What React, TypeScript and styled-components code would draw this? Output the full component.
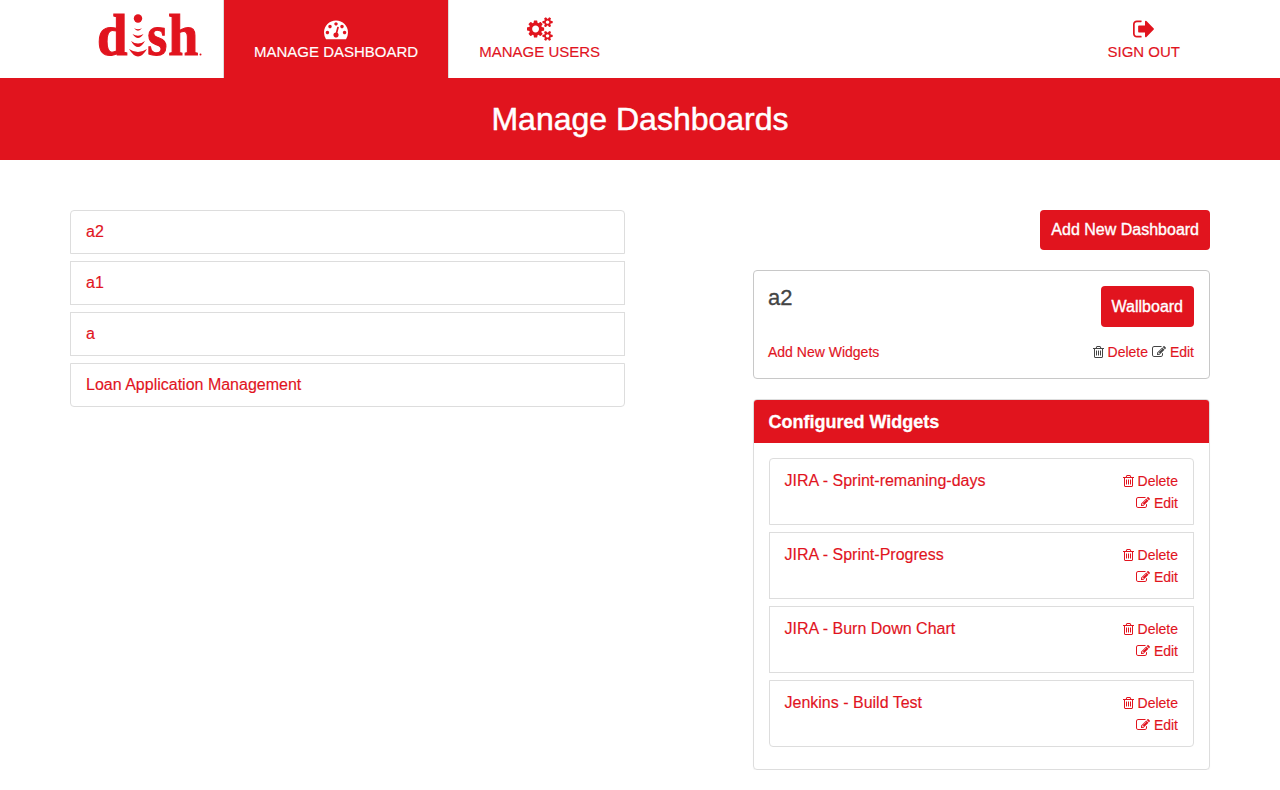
import React from 'react';
import styled, { createGlobalStyle } from 'styled-components';

const RED = '#e1141e';
const DARK = '#444444';

const GlobalStyle = createGlobalStyle`
  * { box-sizing: border-box; }
  body {
    margin: 0;
    background: #fff;
    color: ${DARK};
    font: 16px/22px "Liberation Sans", Arial, sans-serif;
    -webkit-text-stroke: 0.15px currentColor;
  }
`;

const bigGear = 'M832 896q0-106-75-181t-181-75-181 75-75 181 75 181 181 75 181-75 75-181zm768 512q0-52-38-90t-90-38-90 38-38 90q0 53 37.5 90.5t90.5 37.5 90.5-37.5 37.5-90.5zm0-1024q0-52-38-90t-90-38-90 38-38 90q0 53 37.5 90.5t90.5 37.5 90.5-37.5 37.5-90.5zm-384 421v185q0 10-7 19.5t-16 10.5l-155 24q-11 35-32 76 34 48 90 115 7 11 7 20 0 12-7 19-23 30-82.500 89.500t-78.500 59.500q-11 0-21-7l-115-90q-37 19-77 31-11 108-23 155-7 24-30 24h-186q-11 0-20-7.500t-10-17.500l-23-153q-34-10-75-31l-118 89q-7 7-20 7-11 0-21-8-144-133-144-160 0-9 7-19 10-14 41-53t47-61q-23-44-35-82l-152-24q-10-1-17-9.500t-7-19.500v-185q0-10 7-19.500t16-10.500l155-24q11-35 32-76-34-48-90-115-7-11-7-20 0-12 7-20 22-30 82-89t79-59q11 0 21 7l115 90q34-18 77-32 11-108 23-154 7-24 30-24h186q11 0 20 7.500t10 17.500l23 153q34 10 75 31l118-89q8-7 20-7 11 0 21 8 144 133 144 160 0 8-7 19-12 16-42 54t-45 60q23 48 34 82l152 23q10 2 17 10.500t7 19.500z';
const smallGear = 'v140q0 16-149 31-12 27-30 52 51 113 51 138 0 4-4 7-122 71-124 71-8 0-46-47t-52-68q-20 2-30 2t-30-2q-14 21-52 68t-46 47q-2 0-124-71-4-3-4-7 0-25 51-138-18-25-30-52-149-15-149-31v-140q0-16 149-31 13-29 30-52-51-113-51-138 0-4 4-7 4-2 35-20t59-34 30-16q8 0 46 46.500t52 67.500q20-2 30-2t30 2q51-71 92-112l6-2q4 0 124 70 4 3 4 7 0 25-51 138 17 23 30 52 149 15 149 31z';
const dot = 'q0-53-37.5-90.5t-90.5-37.5-90.5 37.5-37.5 90.5 37.5 90.5 90.5 37.5 90.5-37.5 37.5-90.5z';

const icons = {
  gauge: {
    x: 0,
    w: 1792,
    d: `M384 1152${dot}m192-448${dot}m428 481l101-382q6-26-7.5-48.5t-38.5-29.5-48 6.5-30 39.5l-101 382q-60 5-107 43.5t-63 98.5q-20 77 20 146t117 89 146-20 89-117q16-60-6-117t-72-91zm660-33${dot}m-640-640${dot}m448 192${dot}m320 448q0 261-141 483-19 29-54 29h-1402q-35 0-54-29-141-221-141-483 0-182 71-348t191-286 286-191 348-71 348 71 286 191 191 286 71 348z`,
  },
  gears: { x: -64, w: 1920, d: `${bigGear}m640 533${smallGear}m0-1024${smallGear}` },
  signOut: {
    x: 64,
    w: 1568,
    d: 'M704 1440q0 4 1 20t.5 26.5-3 23.5-10 19.5-20.500 6.500h-320q-119 0-203.500-84.500t-84.500-203.500v-704q0-119 84.500-203.500t203.500-84.500h320q13 0 22.500 9.500t9.500 22.500q0 4 1 20t.5 26.500-3 23.500-10 19.500-20.500 6.500h-320q-66 0-113 47t-47 113v704q0 66 47 113t113 47h312l11.500 1 11.500 3 8 5.500 7 9 2 13.500zm928-544q0 26-19 45l-544 544q-19 19-45 19t-45-19-19-45v-288h-448q-26 0-45-19t-19-45v-384q0-26 19-45t45-19h448v-288q0-26 19-45t45-19 45 19l544 544q19 19 19 45z',
  },
  trash: {
    x: 192,
    w: 1408,
    d: 'M704 736v576q0 14-9 23t-23 9h-64q-14 0-23-9t-9-23v-576q0-14 9-23t23-9h64q14 0 23 9t9 23zm256 0v576q0 14-9 23t-23 9h-64q-14 0-23-9t-9-23v-576q0-14 9-23t23-9h64q14 0 23 9t9 23zm256 0v576q0 14-9 23t-23 9h-64q-14 0-23-9t-9-23v-576q0-14 9-23t23-9h64q14 0 23 9t9 23zm128 724v-948h-896v948q0 22 7 40.500t14.500 27 10.500 8.500h832q3 0 10.500-8.500t14.500-27 7-40.500zm-672-1076h448l-48-117q-7-9-17-11h-317q-10 2-17 11zm928 32v64q0 14-9 23t-23 9h-96v948q0 83-47 143.500t-113 60.500h-832q-66 0-113-58.500t-47-141.500v-952h-96q-14 0-23-9t-9-23v-64q0-14 9-23t23-9h309l70-167q15-37 54-63t79-26h320q40 0 79 26t54 63l70 167h309q14 0 23 9t9 23z',
  },
  edit: {
    x: 0,
    w: 1792,
    d: 'M888 1184l116-116-152-152-116 116v56h96v96h56zm440-720q-16-16-33 1l-350 350q-17 17-1 33t33-1l350-350q17-17 1-33zm80 594v190q0 119-84.500 203.500t-203.500 84.500h-832q-119 0-203.500-84.500t-84.500-203.500v-832q0-119 84.500-203.500t203.500-84.500h832q63 0 117 25 15 7 18 23 3 17-9 29l-49 49q-14 14-32 8-23-6-45-6h-832q-66 0-113 47t-47 113v832q0 66 47 113t113 47h832q66 0 113-47t47-113v-126q0-13 9-22l64-64q15-15 35-7t20 29zm-96-738l288 288-672 672h-288v-288zm444 132l-92 92-288-288 92-92q28-28 68-28t68 28l152 152q28 28 28 68t-28 68z',
  },
};

const IconSvg = styled.svg`
  display: block;
  fill: currentColor;
  flex: none;
  overflow: visible;
`;

function Icon({ name, size }: { name: keyof typeof icons; size: number }) {
  const { x, w, d } = icons[name];
  return (
    <IconSvg width={(w / 1792) * size} height={size} viewBox={`${x} 0 ${w} 1792`} aria-hidden>
      <path d={d} />
    </IconSvg>
  );
}

const Header = styled.header`
  display: flex;
  height: 78px;
  padding: 0 70px;
`;

const LogoLink = styled.a`
  width: 153px;
  padding: 8px 0 0 24px;
`;

const LogoSvg = styled.svg`
  display: block;
  overflow: visible;
  font: bold 59px "Liberation Serif", serif;
  fill: ${RED};
  -webkit-text-stroke: 0;
  text {
    stroke: ${RED};
    stroke-width: 1.1px;
  }
`;

function Logo() {
  return (
    <LogoSvg width="112" height="54" viewBox="94 8 112 54" role="img" aria-label="dish">
      <text x="97" y="55.300" textLength="30.500" lengthAdjust="spacingAndGlyphs">d</text>
      <circle cx="138" cy="18.500" r="4.200" />
      <path d="M134 28Q138 30.500 142 28Q138 33.500 134 28Z" />
      <path d="M132.500 34Q138 37.500 143.500 34Q138 42 132.500 34Z" />
      <path d="M131 41Q138 46 145 41Q138 53 131 41Z" />
      <path d="M129 49Q138 55 147 49Q138 64 129 49Z" />
      <text x="147.200" y="55.300" textLength="20" lengthAdjust="spacingAndGlyphs">s</text>
      <text x="168.200" y="55.300" textLength="30" lengthAdjust="spacingAndGlyphs">h</text>
      <circle cx="200.500" cy="54.500" r="1" />
    </LogoSvg>
  );
}

const NavItem = styled.a<{ $active?: boolean; $end?: boolean }>`
  display: flex;
  flex-direction: column;
  align-items: center;
  gap: 0.5px;
  padding: 16.5px 30px 0;
  font-size: 15px;
  line-height: 21px;
  white-space: nowrap;
  color: ${(p) => (p.$active ? '#fff' : RED)};
  background: ${(p) => (p.$active ? RED : 'transparent')};
  border-left: 1px solid ${(p) => (p.$end ? 'transparent' : '#dddddd')};
  margin-left: ${(p) => (p.$end ? 'auto' : '0')};
`;

const Banner = styled.div`
  height: 82px;
  background: ${RED};
  text-align: center;
`;

const Title = styled.h1`
  margin: 0;
  color: #fff;
  font-size: 32px;
  font-weight: 400;
  line-height: 82px;
  -webkit-text-stroke: 0.5px #fff;
`;

const Content = styled.main`
  display: flex;
  justify-content: space-between;
  align-items: flex-start;
  padding: 50px 70px 0;
`;

const List = styled.div<{ $width?: string }>`
  display: flex;
  flex-direction: column;
  gap: 7px;
  width: ${(p) => p.$width ?? 'auto'};
`;

const Row = styled.div<{ $tall?: boolean }>`
  display: flex;
  justify-content: space-between;
  height: ${(p) => (p.$tall ? '67px' : '44px')};
  padding: ${(p) => (p.$tall ? '11px 15px 10px 14.500px' : '10px 15px')};
  border: 1px solid #dddddd;
  color: ${RED};
  &:first-child { border-radius: 4px 4px 0 0; }
  &:last-child { border-radius: 0 0 4px 4px; }
`;

const Side = styled.section`
  display: flex;
  flex-direction: column;
  width: 457px;
`;

const Button = styled.button<{ $tall?: boolean }>`
  align-self: flex-end;
  height: ${(p) => (p.$tall ? '41px' : '40px')};
  padding: 0 11px;
  border: 0;
  border-radius: 4px;
  background: ${RED};
  color: #fff;
  font: inherit;
  -webkit-text-stroke: 0.35px #fff;
`;

const Card = styled.div`
  display: flex;
  flex-direction: column;
  justify-content: space-between;
  height: 109px;
  margin-top: 20px;
  padding: 15px 15px 15px 14px;
  border: 1px solid #c8c8c8;
  border-radius: 4px;
`;

const Line = styled.div`
  display: flex;
  justify-content: space-between;
`;

const CardTitle = styled.h2`
  margin: 0;
  font-size: 22px;
  font-weight: 400;
  line-height: 24px;
  -webkit-text-stroke: 0.3px currentColor;
`;

const Link = styled.a`
  color: ${RED};
  font-size: 14px;
`;

const Actions = styled.div<{ $stacked?: boolean }>`
  display: flex;
  flex-direction: ${(p) => (p.$stacked ? 'column' : 'row')};
  align-items: ${(p) => (p.$stacked ? 'flex-end' : 'center')};
  gap: ${(p) => (p.$stacked ? '0' : '4px')};
`;

const Action = styled.span<{ $gap: number }>`
  display: flex;
  align-items: center;
  gap: ${(p) => p.$gap}px;
  height: 22px;
`;

const Panel = styled.div`
  height: 371px;
  margin-top: 20px;
  border: 1px solid #dddddd;
  border-radius: 4px;
  box-shadow: 0 1px 1px rgba(0, 0, 0, 0.05);
`;

const PanelHeading = styled.h3`
  height: 43px;
  margin: 0;
  padding: 1px 14.5px 0;
  border-radius: 3px 3px 0 0;
  background: ${RED};
  color: #fff;
  font-size: 18px;
  line-height: 43px;
  -webkit-text-stroke: 0.3px #fff;
`;

const PanelBody = styled.div`
  padding: 15px;
`;

const dashboards = ['a2', 'a1', 'a', 'Loan Application Management'];
const widgets = ['JIRA - Sprint-remaning-days', 'JIRA - Sprint-Progress', 'JIRA - Burn Down Chart', 'Jenkins - Build Test'];

function RowActions({ stacked }: { stacked?: boolean }) {
  return (
    <Actions $stacked={stacked}>
      <Action $gap={3.5}><Icon name="trash" size={14} /><Link>Delete</Link></Action>
      <Action $gap={3.9}><Icon name="edit" size={14} /><Link>Edit</Link></Action>
    </Actions>
  );
}

export default function App() {
  return (
    <>
      <GlobalStyle />
      <Header>
        <LogoLink><Logo /></LogoLink>
        <NavItem $active><Icon name="gauge" size={24} />MANAGE DASHBOARD</NavItem>
        <NavItem><Icon name="gears" size={24} />MANAGE USERS</NavItem>
        <NavItem $end><Icon name="signOut" size={24} />SIGN OUT</NavItem>
      </Header>
      <Banner><Title>Manage Dashboards</Title></Banner>
      <Content>
        <List $width="555px">
          {dashboards.map((name) => <Row key={name}>{name}</Row>)}
        </List>
        <Side>
          <Button>Add New Dashboard</Button>
          <Card>
            <Line>
              <CardTitle>a2</CardTitle>
              <Button $tall>Wallboard</Button>
            </Line>
            <Line>
              <Link>Add New Widgets</Link>
              <RowActions />
            </Line>
          </Card>
          <Panel>
            <PanelHeading>Configured Widgets</PanelHeading>
            <PanelBody>
              <List>
                {widgets.map((name) => (
                  <Row key={name} $tall>{name}<RowActions stacked /></Row>
                ))}
              </List>
            </PanelBody>
          </Panel>
        </Side>
      </Content>
    </>
  );
}
